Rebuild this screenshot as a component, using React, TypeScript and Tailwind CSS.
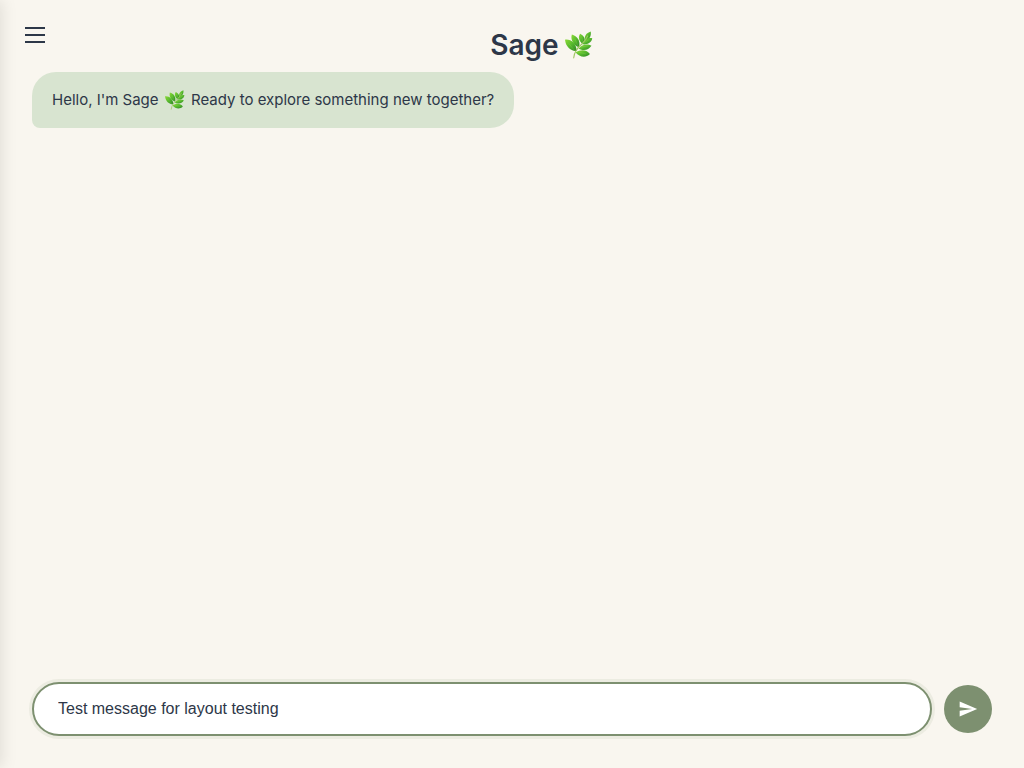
import { useState } from "react";

function Leaf({ className }: { className: string }) {
  return (
    <svg viewBox="0 0 37 36" className={className} role="img" aria-label="Herb">
      <defs>
        <linearGradient id="leaf" x1="0" y1="0" x2="1" y2="1">
          <stop offset="0" stopColor="#8ddb38" />
          <stop offset="0.5" stopColor="#56b82d" />
          <stop offset="1" stopColor="#2c8425" />
        </linearGradient>
      </defs>
      <g fill="url(#leaf)">
        <path d="M0 11C8 10 15 16 15.500 26C7 26 1 20 0 11Z" />
        <path d="M9 4C16 6 21 12 18.500 21C11 18 7 11 9 4Z" />
        <path d="M20 3C26 6 28 11 24 17C18 13 17 7 20 3Z" />
        <path d="M34 0C35 6 32 11 26.500 12.500C25 6 28 2 34 0Z" />
        <path d="M36 9C35 15 29 18 23 17C25 11 30 8 36 9Z" />
        <path d="M35 19C31 25 24 26 18 22.500C23 16.500 30 16 35 19Z" />
        <path d="M33 30C27 36 19 34 14 28C21 23 29 24 33 30Z" />
      </g>
      <path d="M11.500 35C12 28 17 21 23 16C26 13 28 10 30 6" fill="none" stroke="#a1c565" strokeWidth="1.400" strokeLinecap="round" />
      <path d="M14 27L5 16M18 21L13 10M24 15L22 7M25 15L32 11M20 21L31 19M16 27L28 30" fill="none" stroke="#b4e566" strokeWidth="0.500" opacity="0.5" />
    </svg>
  );
}

export default function App() {
  const [message, setMessage] = useState("Test message for layout testing");

  return (
    <div className="relative flex min-h-screen flex-col overflow-hidden bg-[#f9f6ef] font-['Inter','Liberation_Sans',sans-serif] text-[#2d3748]">
      <aside aria-hidden="true" className="absolute inset-y-0 right-full w-72 shadow-[2px_0_15px_rgba(0,0,0,0.1)]" />

      <header className="flex items-start pt-[15px] pl-[15px]">
        <button type="button" aria-label="Open menu" className="flex size-10 shrink-0 items-center justify-center">
          <svg viewBox="0 0 20 18" className="h-[18px] w-5" fill="#2d3748" aria-hidden="true">
            <path d="M0 1H20V3H0ZM0 8H20V10H0ZM0 15H20V17H0Z" />
          </svg>
        </button>
        <h1 className="flex flex-1 items-center justify-center gap-1.5 pt-[14px] pl-1 text-[28px] leading-8 font-semibold">
          Sage <Leaf className="size-7" />
        </h1>
      </header>

      <main className="flex flex-1 flex-col items-start px-8 pt-[11px]">
        <p className="rounded-3xl rounded-bl-lg bg-[#d8e4d0] px-5 py-4 text-[15px] leading-6">
          Hello, I'm Sage <Leaf className="mx-0.5 inline size-5 align-[-5px]" /> Ready to explore something new together?
        </p>
      </main>

      <form className="flex items-center gap-3 px-8 pb-8" onSubmit={(event) => event.preventDefault()}>
        <input
          type="text"
          aria-label="Message"
          value={message}
          onChange={(event) => setMessage(event.target.value)}
          className="h-[54px] min-w-0 flex-1 rounded-full border-2 border-[#7d9070] bg-white px-6 font-['Liberation_Sans',Arial,sans-serif] text-base outline-none ring-3 ring-[#7d9070]/10"
        />
        <button type="submit" aria-label="Send message" className="flex size-12 shrink-0 items-center justify-center rounded-full bg-[#7d9070] text-white">
          <svg viewBox="0 0 24 24" className="size-5" fill="currentColor" aria-hidden="true">
            <path d="M2.010 21L23 12L2.010 3L2 10L17 12L2 14Z" />
          </svg>
        </button>
      </form>
    </div>
  );
}
